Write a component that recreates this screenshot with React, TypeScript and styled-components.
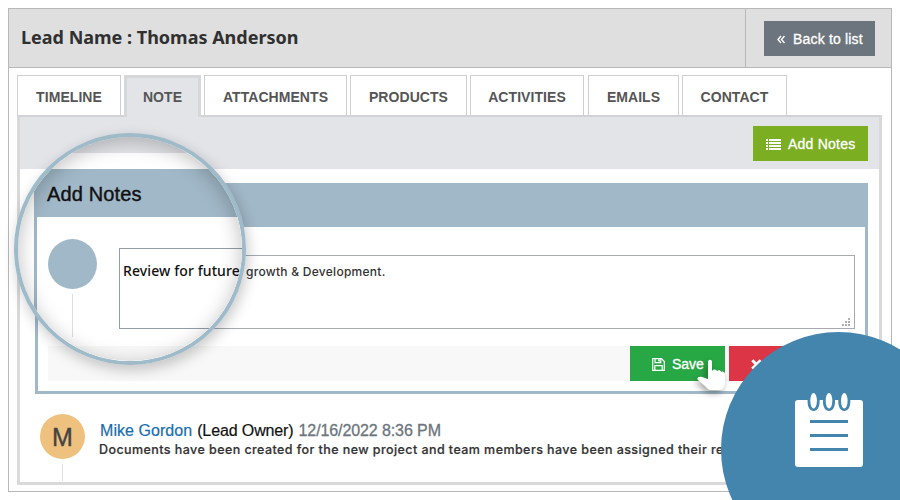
import React from "react";
import styled, { createGlobalStyle } from "styled-components";

const Global = createGlobalStyle`
  * { box-sizing: border-box; }
  html, body { margin: 0; background: #fff; overflow: hidden; }
  body { font-family: "Liberation Sans", Arial, sans-serif; }
`;

const Page = styled.main`
  position: relative;
  width: 900px;
  height: 500px;
  padding: 8px;
  overflow: hidden;
  background: #fff;
`;

const Frame = styled.section`
  display: flex;
  flex-direction: column;
  width: 884px;
  height: 484px;
  border: 1px solid #b8b8ba;
`;

const Header = styled.header`
  display: flex;
  flex: none;
  height: 59px;
  background: #dfdfdf;
  border-bottom: 1px solid #b8b8ba;
`;

const Title = styled.h1`
  width: 736px;
  margin: 0;
  padding-left: 12px;
  font: 700 18px/57px "Noto Sans", sans-serif;
  color: #303030;
  white-space: nowrap;
`;

const HeaderActions = styled.div`
  display: flex;
  flex: 1;
  padding: 12px 0 0 18px;
  border-left: 1px solid #b8b8ba;
`;

const Button = styled.button<{ $bg: string; $w: number; $pad: number; $gap: number; $ls?: number }>`
  display: flex;
  align-items: center;
  flex: none;
  width: ${(p) => p.$w}px;
  height: 35px;
  padding: 1px 0 0 ${(p) => p.$pad}px;
  gap: ${(p) => p.$gap}px;
  border: 0;
  background: ${(p) => p.$bg};
  color: #fff;
  font: 14px "Liberation Sans", Arial, sans-serif;
  letter-spacing: ${(p) => p.$ls ?? 0}px;
  -webkit-text-stroke: 0.3px #fff;
  white-space: nowrap;
`;

const Tabs = styled.nav`
  display: flex;
  flex: none;
  height: 47px;
  padding: 7px 0 0 8px;
`;

const Tab = styled.div<{ $w: number; $gap: number; $active?: boolean }>`
  flex: none;
  width: ${(p) => p.$w}px;
  height: ${(p) => (p.$active ? 42 : 40)}px;
  margin-right: ${(p) => p.$gap}px;
  border: ${(p) => (p.$active ? 3 : 1)}px solid ${(p) => (p.$active ? "#d6d7d9" : "#cfcfcf")};
  border-bottom: 0;
  background: ${(p) => (p.$active ? "#e3e4e8" : "#fff")};
  color: #555;
  font-weight: 700;
  font-size: 14px;
  line-height: ${(p) => (p.$active ? 39 : 43)}px;
  letter-spacing: 0.06px;
  text-align: center;
  white-space: nowrap;
  z-index: 1;
`;

const Panel = styled.div`
  flex: none;
  width: 865px;
  height: 370px;
  margin-left: 8px;
  border: 3px solid #d9d9d9;
  border-top: 2px solid #d2d3d6;
`;

const Toolbar = styled.div`
  display: flex;
  justify-content: flex-end;
  height: 52px;
  padding: 9px 11px 0 0;
  background: #e3e4e8;
`;

const NoteCard = styled.div`
  width: 833px;
  height: 211px;
  margin: 14px 0 0 15px;
  border: 3px solid #a1b8c8;
  border-top: 44px solid #a1b8c8;
`;

const NoteInput = styled.div`
  display: flex;
  justify-content: space-between;
  width: 735px;
  height: 74px;
  margin: 28px 0 0 82px;
  padding: 7px 3px 2px 125px;
  border: 1px solid #a5abb0;
  font: 500 12px/17px Inter, sans-serif;
  letter-spacing: 0.27px;
  color: #333;
  svg { align-self: flex-end; }
`;

const FormActions = styled.div`
  display: flex;
  width: 807px;
  height: 35px;
  margin: 17px 0 0 10px;
  padding-left: 582px;
  gap: 4px;
  background: #f8f8f8;
`;

const Entry = styled.article`
  display: flex;
  padding: 20px 0 0 20px;
  gap: 14px;
  height: 88px;
  overflow: hidden;
`;

const AvatarColumn = styled.div`
  display: flex;
  flex-direction: column;
  align-items: center;
  flex: none;
  width: 45px;
  gap: 5px;
`;

const Avatar = styled.div`
  flex: none;
  width: 45px;
  height: 45px;
  border-radius: 50%;
  background: #efc17f;
  color: #444;
  font-size: 25px;
  line-height: 47px;
  text-align: center;
  -webkit-text-stroke: 0.4px;
`;

const Thread = styled.div<{ $h: number }>`
  width: 1px;
  height: ${(p) => p.$h}px;
  background: #dcdfe2;
`;

const EntryText = styled.div`
  padding-top: 8px;
  white-space: nowrap;
`;

const EntryHeading = styled.div`
  display: flex;
  padding-left: 1px;
  gap: 5px;
  font-size: 16px;
  line-height: 18px;
  color: #111;
`;

const Author = styled.span`
  color: #176eae;
  letter-spacing: 0.05px;
  -webkit-text-stroke: 0.2px;
`;

const Role = styled.span`
  letter-spacing: -0.12px;
  -webkit-text-stroke: 0.2px;
`;

const Stamp = styled.time`
  color: #6c757d;
  letter-spacing: -0.1px;
  -webkit-text-stroke: 0.3px;
`;

const EntryBody = styled.p`
  margin: 1px 0 0;
  font: 500 12.5px/18px Inter, sans-serif;
  letter-spacing: 0.43px;
  -webkit-text-stroke: 0.2px;
  color: #333;
`;

const Lens = styled.div`
  position: absolute;
  left: 14px;
  top: 133px;
  width: 232px;
  height: 232px;
  border: 4px solid #9fbac9;
  border-radius: 50%;
  overflow: hidden;
  background: linear-gradient(#e3e4e8 16px, #fff 16px);
  box-shadow: 2px 5px 14px rgba(0, 0, 0, 0.22);
  &::after {
    content: "";
    position: absolute;
    inset: 0;
    border-radius: 50%;
    box-shadow: inset 0 4px 20px rgba(0, 0, 0, 0.25);
  }
`;

const LensCard = styled.div`
  width: 240px;
  height: 240px;
  margin: 32px 0 0 16px;
  border-left: 3px solid #a1b8c8;
  background: linear-gradient(#fff 129px, #f8f8f8 129px) 11px 48px no-repeat;
`;

const LensTitle = styled.div`
  height: 48px;
  padding-left: 10px;
  background: #a1b8c8;
  color: #111;
  font-size: 20px;
  line-height: 50px;
  letter-spacing: 0.15px;
  -webkit-text-stroke: 0.4px;
`;

const LensBody = styled.div`
  display: flex;
  padding: 22px 0 0 11px;
  gap: 22px;
`;

const LensAvatar = styled.div`
  flex: none;
  width: 49px;
  height: 50px;
  border-radius: 50%;
  background: #a1b8c8;
`;

const LensColumn = styled(AvatarColumn)`
  width: 49px;
`;

const LensInput = styled.div`
  width: 160px;
  height: 81px;
  margin-top: 9px;
  padding: 12px 0 0 3px;
  border: 1px solid #949ca4;
  color: #111;
  font: 500 14px/20px "Noto Sans", sans-serif;
  letter-spacing: 0.1px;
  white-space: nowrap;
`;

const Badge = styled.div`
  position: absolute;
  left: 721px;
  top: 332px;
  width: 235px;
  height: 235px;
  border-radius: 50%;
  background: #4385ac;
  svg { margin: 60px 0 0 73px; display: block; }
`;

const Pointer = styled.svg`
  position: absolute;
  left: 696px;
  top: 358px;
  filter: drop-shadow(-2px 3px 3px rgba(0, 0, 0, 0.35));
`;

const tabs = [
  { label: "TIMELINE", w: 104, gap: 3 },
  { label: "NOTE", w: 77, gap: 3, active: true },
  { label: "ATTACHMENTS", w: 143, gap: 3 },
  { label: "PRODUCTS", w: 117, gap: 3 },
  { label: "ACTIVITIES", w: 114, gap: 4 },
  { label: "EMAILS", w: 91, gap: 3 },
  { label: "CONTACT", w: 105, gap: 0 },
];

const ChevronsIcon = () => (
  <svg width="8" height="9" viewBox="0 0 8 9" fill="none" stroke="#fff" strokeWidth="1.4">
    <path d="M4 1 1 4.5 4 8M7.5 1 4.5 4.5 7.5 8" />
  </svg>
);

const ListIcon = () => (
  <svg width="15" height="11" viewBox="0 0 15 11" fill="#fff">
    {[0, 3, 6, 9].map((y) => (
      <path key={y} d={`M0 ${y}h2v2H0zM3 ${y}h12v2H3z`} />
    ))}
  </svg>
);

const SaveIcon = () => (
  <svg width="13" height="13" viewBox="0 0 13 13" fill="none" stroke="#fff" strokeWidth="1.2">
    <path d="M.7.7h8.8l2.8 2.8v8.8H.7zM3 .7v4h5.8v-4M2.8 12.2V7.7h7.4v4.5" />
    <path d="M6.2 1.2h1.6v2.4H6.2z" fill="#fff" stroke="none" />
  </svg>
);

const CloseIcon = () => (
  <svg width="11" height="11" viewBox="0 0 11 11" stroke="#fff" strokeWidth="3">
    <path d="m1.3 1.3 8.4 8.4M9.7 1.3 1.3 9.7" />
  </svg>
);

const ResizeGrip = () => (
  <svg width="9" height="8" viewBox="0 0 9 8" fill="#b0b0b0">
    <path d="M6 0h2v2H6zM3 3h2v2H3zM6 3h2v2H6zM0 6h2v2H0zM3 6h2v2H3zM6 6h2v2H6z" />
  </svg>
);

const NotepadIcon = () => (
  <svg width="70" height="76" viewBox="0 0 70 76">
    <rect x="1" y="8" width="68" height="67" rx="3" fill="#fff" />
    {[19.6, 35, 50.3].map((x) => (
      <g key={x}>
        <path d={`M${x - 6} 7v3c0 5 2.4 9 6 9s6-4 6-9V7z`} fill="#4385ac" />
        <ellipse cx={x} cy="8.7" rx="3.3" ry="7.8" fill="#fff" />
      </g>
    ))}
    <path d="M16 29.5h38M16 43.5h38M16 57.5h38" stroke="#4385ac" strokeWidth="3" />
  </svg>
);

export default function App() {
  return (
    <Page>
      <Global />
      <Frame>
        <Header>
          <Title>Lead Name : Thomas Anderson</Title>
          <HeaderActions>
            <Button $bg="#6c757d" $w={111} $pad={13} $gap={8} $ls={0.18}>
              <ChevronsIcon />
              Back to list
            </Button>
          </HeaderActions>
        </Header>
        <Tabs>
          {tabs.map((t) => (
            <Tab key={t.label} $w={t.w} $gap={t.gap} $active={t.active}>
              {t.label}
            </Tab>
          ))}
        </Tabs>
        <Panel>
          <Toolbar>
            <Button $bg="#7cae22" $w={115} $pad={13} $gap={7} $ls={0.22}>
              <ListIcon />
              Add Notes
            </Button>
          </Toolbar>
          <NoteCard>
            <NoteInput>
              growth &amp; Development.
              <ResizeGrip />
            </NoteInput>
            <FormActions>
              <Button $bg="#28a745" $w={95} $pad={22} $gap={7}>
                <SaveIcon />
                Save
              </Button>
              <Button $bg="#dc3545" $w={96} $pad={22} $gap={7}>
                <CloseIcon />
              </Button>
            </FormActions>
          </NoteCard>
          <Entry>
            <AvatarColumn>
              <Avatar>M</Avatar>
              <Thread $h={17} />
            </AvatarColumn>
            <EntryText>
              <EntryHeading>
                <Author>Mike Gordon</Author>
                <Role>(Lead Owner)</Role>
                <Stamp>12/16/2022 8:36 PM</Stamp>
              </EntryHeading>
              <EntryBody>
                Documents have been created for the new project and team members have been assigned their re
              </EntryBody>
            </EntryText>
          </Entry>
        </Panel>
      </Frame>
      <Lens>
        <LensCard>
          <LensTitle>Add Notes</LensTitle>
          <LensBody>
            <LensColumn>
              <LensAvatar />
              <Thread $h={43} />
            </LensColumn>
            <LensInput>Review for future</LensInput>
          </LensBody>
        </LensCard>
      </Lens>
      <Pointer width="34" height="36" viewBox="0 0 34 36">
        <path
          d="M12 4c0-3 4-3 4 0v9c1-2 4-2 5 0 1-1 4-1 4 1 2-1 4 0 4 2v8c0 5-2 8-5 8H15c-3 0-4-2-6-4l-7-6c-2-2 1-4 4-3l6 2z"
          fill="#fff"
        />
      </Pointer>
      <Badge>
        <NotepadIcon />
      </Badge>
    </Page>
  );
}
